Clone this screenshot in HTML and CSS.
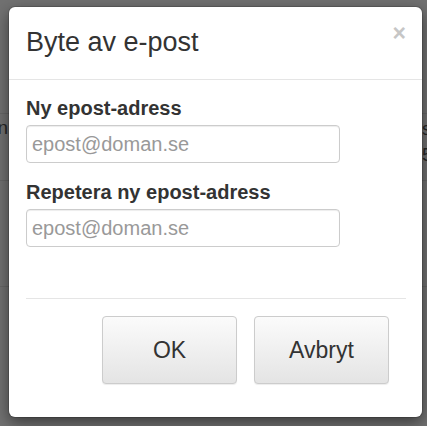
FILE: index.html
```html
<!DOCTYPE html>
<html lang="sv">
<head>
    <meta charset="UTF-8">
    <meta name="viewport" content="width=device-width, initial-scale=1.0">
    <title>Byte av e-post</title>
    <link rel="stylesheet" href="styles.css">
</head>
<body>

    <!-- sidan bakom dialogen -->
    <div class="page">
        <div class="page-row row-data">
            <div class="cell-left"><span>Mottagen<br>2014-0</span></div>
            <div class="cell-right"><span>s<br>5</span></div>
        </div>
        <div class="page-row row-mid"></div>
        <div class="page-row row-low"></div>
    </div>

    <div class="modal">
        <div class="modal-header">
            <h4 class="modal-title">Byte av e-post</h4>
            <button class="close" type="button">&times;</button>
        </div>
        <div class="modal-body">
            <div class="form-group">
                <label for="epost1">Ny epost-adress</label>
                <input type="text" id="epost1" placeholder="epost@doman.se">
            </div>
            <div class="form-group">
                <label for="epost2">Repetera ny epost-adress</label>
                <input type="text" id="epost2" placeholder="epost@doman.se">
            </div>
        </div>
        <div class="modal-footer">
            <button class="btn" type="button">OK</button>
            <button class="btn" type="button">Avbryt</button>
        </div>
    </div>

</body>
</html>
```

FILE: styles.css
```css
body {
    margin: 0;
    background-color: #717171; /* bakgrund under overlay */
    font-family: "Liberation Sans", Arial, sans-serif;
    color: #333;
    height: 426px;
    overflow: hidden;
}
.page {
    padding-top: 113px;
}
.page-row {
    border-top: 1px solid #666;
}
.row-data {
    height: 66px;
    display: flex;
    justify-content: space-between;
    font-size: 19px;
    line-height: 26px;
    color: #262626;
}
.cell-left {
    width: 8px;
    overflow: hidden;
    display: flex;
    justify-content: flex-end;
    padding-top: 1px;
}
.cell-left span,
.cell-right span {
    white-space: nowrap;
}
.cell-right {
    width: 5px;
    overflow: hidden;
    padding-top: 2px;
}
.row-mid {
    height: 105px;
}
.row-low {
    height: 103px;
}
.modal {
    position: absolute;
    left: 9px;
    top: 7px;
    width: 413px;
    background-color: #fff;
    border-radius: 6px;
    box-shadow: 0 0 0 1px rgba(0, 0, 0, 0.15), 0 5px 15px rgba(0, 0, 0, 0.5);
}
.modal-header {
    display: flex;
    justify-content: space-between;
    align-items: flex-start;
    padding: 16px 17px 17px 17px;
    border-bottom: 1px solid #e5e5e5;
}
.modal-title {
    margin: 0;
    font-size: 27px;
    font-weight: normal;
    line-height: 39px;
}
.close {
    padding: 0;
    border: none;
    background: none;
    font-family: "Liberation Sans", Arial, sans-serif;
    font-size: 23px;
    font-weight: bold;
    line-height: 1;
    color: #c6c6c6;
    margin: -1px -1px 0 0;
}
.modal-body {
    padding: 14px 17px 0;
}
.form-group {
    margin-bottom: 15px;
}
.form-group:last-child {
    margin-bottom: 0;
}
label {
    display: block;
    font-size: 20px;
    font-weight: bold;
    line-height: 28px;
    margin-bottom: 3px;
}
input[type="text"] {
    display: block;
    box-sizing: border-box;
    width: 314px;
    height: 38px;
    padding: 0 5px;
    font-family: "Liberation Sans", Arial, sans-serif;
    font-size: 20px;
    color: #555;
    border: 1px solid #ccc;
    border-radius: 4px;
    box-shadow: inset 0 1px 1px rgba(0, 0, 0, 0.075);
}
input::placeholder {
    color: #999;
}
.modal-footer {
    display: flex;
    justify-content: flex-end;
    gap: 17px;
    margin: 51px 16px 0 17px;
    padding: 17px 17px 33px;
    border-top: 1px solid #e5e5e5;
}
.btn {
    box-sizing: border-box;
    width: 135px;
    height: 68px;
    font-family: "Liberation Sans", Arial, sans-serif;
    font-size: 23px;
    color: #333;
    background-image: linear-gradient(to bottom, #fbfbfb 0, #e4e4e4 100%);
    border: 1px solid #ccc;
    border-radius: 4px;
    box-shadow: inset 0 1px 0 rgba(255, 255, 255, 0.15), 0 1px 1px rgba(0, 0, 0, 0.075);
    cursor: pointer;
}
```
